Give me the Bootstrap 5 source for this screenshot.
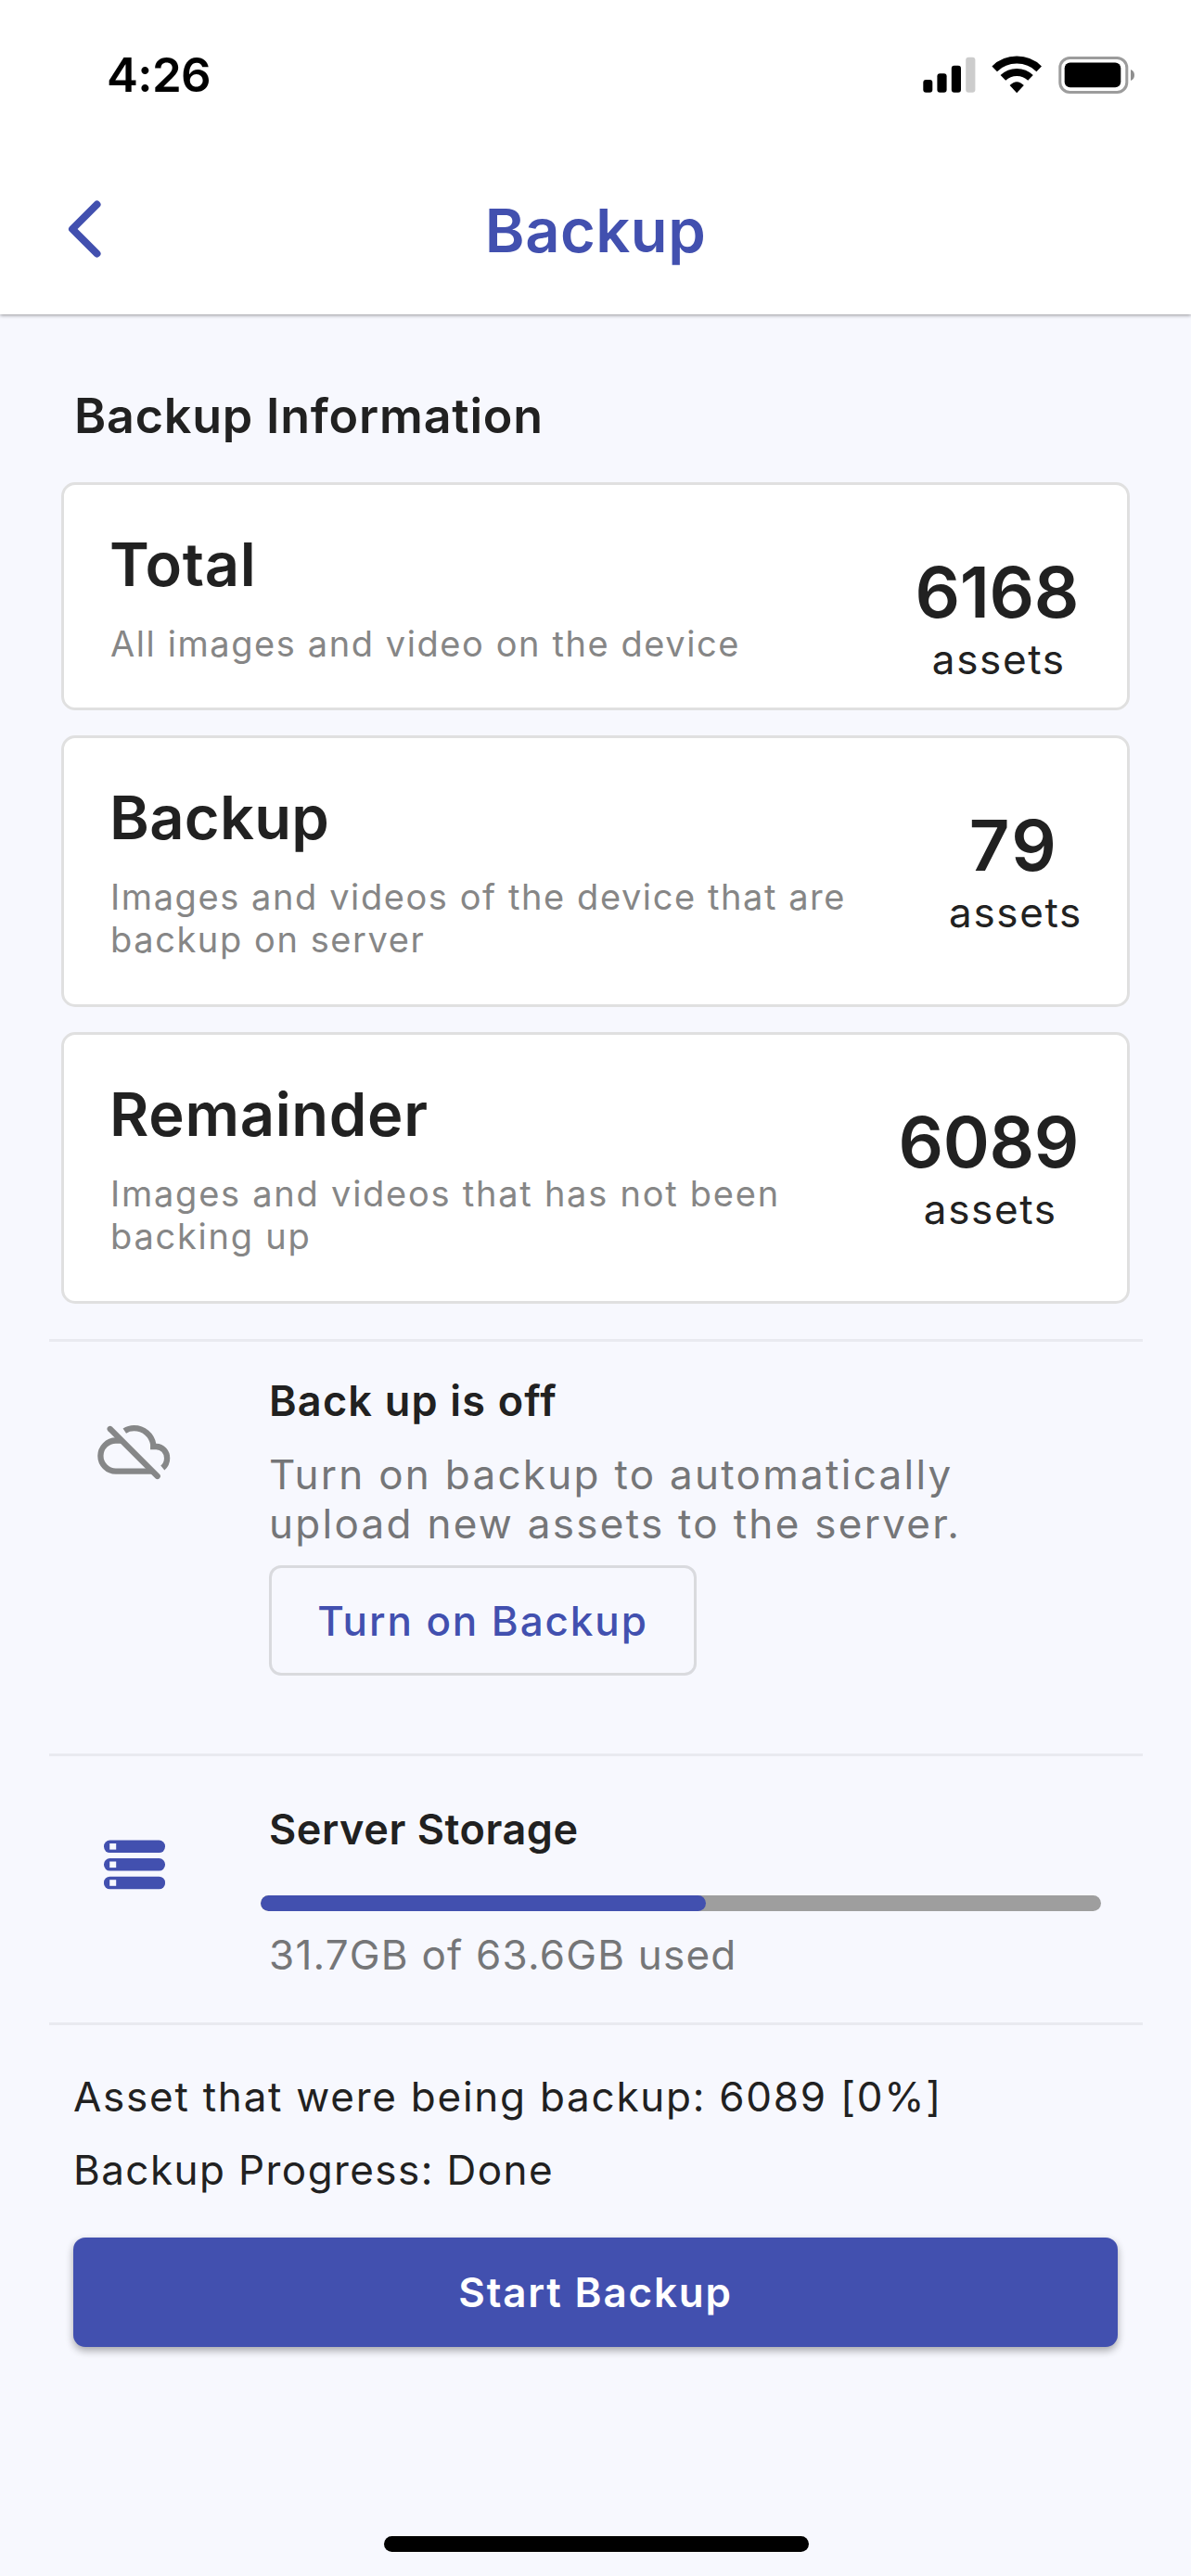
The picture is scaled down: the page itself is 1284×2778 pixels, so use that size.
<!DOCTYPE html>
<html lang="en">
<head>
<meta charset="utf-8">
<meta name="viewport" content="width=device-width, initial-scale=1">
<title>Backup</title>
<link href="https://cdn.jsdelivr.net/npm/bootstrap@5.3.0/dist/css/bootstrap.min.css" rel="stylesheet">
<style>
  :root { --accent: #4250af; --ink: #212121; --canvas: #f7f8fe; }
  body { background: var(--canvas); color: var(--ink); font-family: Inter, "Liberation Sans", sans-serif; font-size: 44px; line-height: 53px; }
  svg { display: block; flex: none; }
  .app-header { height: 339px; box-shadow: 0 1px 4px rgba(0,0,0,.42); }
  .status-bar { height: 162px; padding: 51px 59px 0 115px; color: #000; }
  .clock { font-size: 51px; line-height: 60px; font-weight: 600; letter-spacing: -.67px; }
  .toolbar { height: 177px; padding: 0 70px; }
  .side-slot { width: 120px; }
  .page-title { font-size: 65px; line-height: 76px; font-weight: 600; letter-spacing: .5px; color: var(--accent); margin: 0 0 4px; }
  .page-body { padding: 80px 52px 26px 53px; }
  .section-title { font-size: 52px; line-height: 60px; font-weight: 600; letter-spacing: .8px; margin: 0 28px 41px 27px; }
  .info-list { gap: 27px; margin: 0 14px 0 13px; }
  .info-card { border: 3px solid #e0e0e0; border-radius: 15px; height: 293px; color: var(--ink); }
  .info-card.short { height: 246px; }
  .info-card .card-body { padding: 0 48px 0 50px; }
  .info-text { padding-top: 48px; }
  .info-name { font-size: 65px; line-height: 76px; font-weight: 600; letter-spacing: .7px; margin: 0 0 24px -1px; }
  .info-name.name-backup { letter-spacing: .3px; }
  .info-note { font-size: 38px; line-height: 46px; letter-spacing: 1.58px; color: #868686; margin: 0; max-width: 830px; }
  .info-note.note-rest { letter-spacing: 1.75px; }
  .info-count { padding-top: 70px; }
  .count-num { font-size: 76px; line-height: 90px; font-weight: 600; letter-spacing: -.4px; padding-right: 4px; margin-bottom: 3px; }
  .count-num.two-digit { letter-spacing: 2.5px; }
  .count-unit { line-height: 50px; letter-spacing: 1.65px; }
  .rule { height: 3px; background: #e9eaf0; }
  .icon-slot { width: 237px; flex: none; }
  .cloud-icon { margin: 89px 0 0 52px; }
  .server-icon { margin: 90px 0 0 59px; }
  .row-title { font-size: 45px; line-height: 50px; font-weight: 600; }
  .title-off { letter-spacing: 1.2px; margin: 39px 0 28px; }
  .title-storage { letter-spacing: .55px; margin: 54px 0 46px; }
  .body-note { color: #757678; letter-spacing: 2.28px; margin: 0; width: 780px; }
  .btn-turn { width: 461px; height: 119px; margin: 18px 0 84px; border: 3px solid #d9dade; border-radius: 13px; color: var(--accent); font-size: 44px; font-weight: 500; letter-spacing: 1.9px; padding: 0; }
  .storage-bar { height: 17px; margin: 0 45px 21px -9px; border-radius: 9px; background: #9e9e9e; }
  .storage-bar .progress-bar { background: var(--accent); border-radius: 9px; }
  .used-note { color: #757678; letter-spacing: 1.2px; margin-bottom: 46px; }
  .tail { margin: 51px 27px 0 26px; }
  .tail-line { margin: 0 0 26px; letter-spacing: 1.75px; }
  .tail-line.done { letter-spacing: 1.42px; margin-bottom: 46px; }
  .btn-start { height: 118px; border: 0; border-radius: 13px; background: var(--accent); color: #fff; font-size: 44px; font-weight: 600; letter-spacing: 1.8px; box-shadow: 0 4px 8px rgba(0,0,0,.33); }
  .home-bar { width: 458px; height: 17px; border-radius: 9px; background: #000; margin: 204px auto 0; }
</style>
</head>
<body>
<header class="app-header bg-white position-relative">
  <div class="status-bar d-flex justify-content-between align-items-start">
    <div class="clock">4:26</div>
    <svg width="230" height="60" viewBox="0 0 230 60">
      <rect x="0.3" y="35" width="10" height="13.7" rx="3"/>
      <rect x="15.4" y="28.3" width="10.2" height="20.4" rx="3"/>
      <rect x="30.8" y="19.7" width="10.2" height="29" rx="3"/>
      <rect x="46.2" y="10.7" width="10.2" height="38" rx="3" fill="#ccc"/>
      <g fill="none" stroke="#000" stroke-width="8">
        <path d="M77.2 23.3A34.6 34.6 0 0 1 125.2 23.3"/>
        <path d="M86.4 32.9A21.3 21.3 0 0 1 116 32.9"/>
      </g>
      <path d="M93.6 41Q101.2 33.4 108.8 41L101.2 49.2Z"/>
      <rect x="147.8" y="11.5" width="72" height="37" rx="10.5" fill="none" stroke="#9c9c9c" stroke-width="3"/>
      <rect x="152.7" y="16.4" width="60.6" height="26.8" rx="6"/>
      <path d="M224 24A6.5 6.5 0 0 1 224 36Z" fill="#8f8f8f"/>
    </svg>
  </div>
  <div class="toolbar d-flex align-items-center">
    <div class="side-slot">
      <svg width="42" height="72" viewBox="0 0 42 72" fill="none" stroke="#4250af" stroke-width="8" stroke-linecap="round" stroke-linejoin="round"><path d="M34.5 5.5L8 32L34.5 58.5"/></svg>
    </div>
    <h1 class="page-title flex-fill text-center">Backup</h1>
    <div class="side-slot"></div>
  </div>
</header>

<main class="page-body">
  <h2 class="section-title">Backup Information</h2>
  <div class="info-list d-flex flex-column">
    <div class="card info-card short">
      <div class="card-body d-flex justify-content-between">
        <div class="info-text">
          <h3 class="info-name">Total</h3>
          <p class="info-note">All images and video on the device</p>
        </div>
        <div class="info-count text-center">
          <div class="count-num">6168</div>
          <div class="count-unit">assets</div>
        </div>
      </div>
    </div>
    <div class="card info-card">
      <div class="card-body d-flex justify-content-between">
        <div class="info-text">
          <h3 class="info-name name-backup">Backup</h3>
          <p class="info-note">Images and videos of the device that are backup on server</p>
        </div>
        <div class="info-count text-center">
          <div class="count-num two-digit">79</div>
          <div class="count-unit">assets</div>
        </div>
      </div>
    </div>
    <div class="card info-card">
      <div class="card-body d-flex justify-content-between">
        <div class="info-text">
          <h3 class="info-name">Remainder</h3>
          <p class="info-note note-rest">Images and videos that has not been backing up</p>
        </div>
        <div class="info-count text-center">
          <div class="count-num">6089</div>
          <div class="count-unit">assets</div>
        </div>
      </div>
    </div>
  </div>

  <div class="rule" style="margin-top:38px"></div>
  <section class="d-flex">
    <div class="icon-slot">
      <svg class="cloud-icon" width="80" height="62" viewBox="0 0 80 62" fill="none" stroke="#868788" stroke-width="6.3">
        <path d="M26 17.5H20A16.6 16.6 0 0 0 20 50.7H59"/>
        <path d="M29.3 7.2C32.3 5.2 36 4.2 39.5 4.2C50 4.2 58.5 11.6 60.2 21.5V24H63.5C70 24 75.1 29.8 75.1 36.5C75.1 40.8 73.4 44.4 70.3 47"/>
        <path d="M13.7 5L64.7 56" stroke-linecap="round"/>
      </svg>
    </div>
    <div class="flex-fill">
      <h4 class="row-title title-off">Back up is off</h4>
      <p class="body-note">Turn on backup to automatically upload new assets to the server.</p>
      <button class="btn btn-turn d-flex align-items-center justify-content-center" type="button">Turn on Backup</button>
    </div>
  </section>

  <div class="rule"></div>
  <section class="d-flex">
    <div class="icon-slot">
      <svg class="server-icon" width="66" height="54" viewBox="0 0 66 54">
        <g fill="#4250af">
          <rect y="0.5" width="66" height="13.6" rx="6.5"/>
          <rect y="20" width="66" height="13.6" rx="6.5"/>
          <rect y="39.7" width="66" height="13.6" rx="6.5"/>
        </g>
        <g fill="#f7f8fe">
          <rect x="6.2" y="4" width="7" height="6.6"/>
          <rect x="6.2" y="23.5" width="7" height="6.6"/>
          <rect x="6.2" y="43.2" width="7" height="6.6"/>
        </g>
      </svg>
    </div>
    <div class="flex-fill">
      <h4 class="row-title title-storage">Server Storage</h4>
      <div class="progress storage-bar"><div class="progress-bar" style="width:53%"></div></div>
      <div class="used-note">31.7GB of 63.6GB used</div>
    </div>
  </section>

  <div class="rule"></div>
  <section class="tail">
    <p class="tail-line">Asset that were being backup: 6089 [0%]</p>
    <p class="tail-line done">Backup Progress: Done</p>
    <button class="btn btn-start w-100" type="button">Start Backup</button>
  </section>
  <div class="home-bar"></div>
</main>
<script src="https://cdn.jsdelivr.net/npm/bootstrap@5.3.0/dist/js/bootstrap.bundle.min.js"></script>
</body>
</html>
